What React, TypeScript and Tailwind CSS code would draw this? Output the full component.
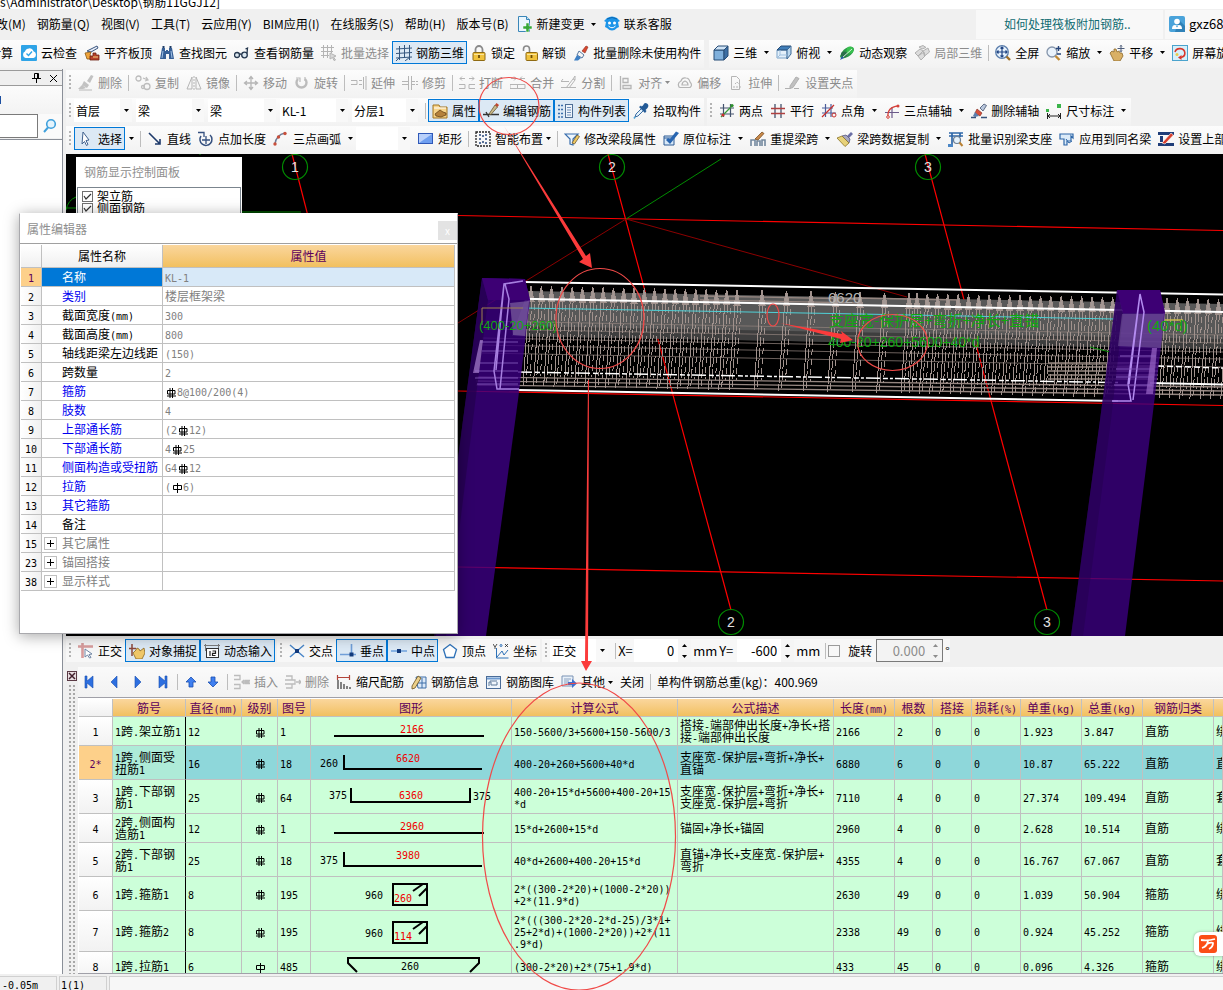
import type { ReactNode } from "react";

/* ---------- icons (16 x 16 grid) ---------- */

const icons: Record<string, ReactNode> = {
  newDoc: (
    <>
      <path d="M1.500 .5h8l3 3v12h-11z" fill="#eaf6fd" stroke="#3a86b8" />
      <path d="M9.500 .5v3h3" fill="#bfe0f2" stroke="#3a86b8" />
      <path d="M9 7h3v3h3v3h-3v3H9v-3H6v-3h3z" fill="#35a838" stroke="#fff" strokeWidth=".5" />
    </>
  ),
  service: (
    <>
      <path d="M3 2q5-3 10 0l3 3-2 1 1 5-2 1q-5 5-10 0l-2-1 1-5-2-1z" fill="#1c94e8" />
      <path d="M3 3q5-3 10 0" fill="none" stroke="#0f68b0" />
      <circle cx="5.500" cy="7" r="1.500" fill="#fff" />
      <circle cx="10.500" cy="7" r="1.500" fill="#fff" />
      <path d="M4.500 10q3.500 3.500 7 0" fill="none" stroke="#fff" />
    </>
  ),
  user: (
    <>
      <rect width="16" height="16" rx="2" fill="#4aa3da" />
      <path d="M10 4l6 6v6H6z" fill="#2f82b8" />
      <circle cx="8" cy="5.500" r="2.800" fill="#fff" />
      <path d="M3 13q0-4 3-4h4q3 0 3 4z" fill="#fff" />
      <path d="M6.500 9.500l1.500 2 1.500-2z" fill="#4aa3da" />
    </>
  ),
  cloud: (
    <>
      <rect width="16" height="16" rx="1" fill="#2fa4e7" />
      <path d="M4.500 13a3.500 3.500 0 0 1-.5-6.500 4.500 4.500 0 0 1 8.500-.2 3.500 3.500 0 0 1 0 6.700z" fill="#fff" />
      <path d="M5.500 8.500l2 2 3.500-4" fill="none" stroke="#2fa4e7" strokeWidth="1.400" />
    </>
  ),
  slab: (
    <>
      <path d="M3 6l10-5 1 2-7 4z" fill="#e8eef8" stroke="#3a557f" />
      <path d="M1 8l6-1-1 3 2 4H3z" fill="#f0a43c" stroke="#8a5a14" strokeWidth=".8" />
      <path d="M6 15v-4h3V8h3v2h3v5z" fill="#b8442b" stroke="#6c2010" strokeWidth=".8" />
      <path d="M9 12h5" stroke="#f4d080" />
    </>
  ),
  binoc: (
    <>
      <path d="M3 3h3v3h1V5h2v1h1V3h3l2 11h-5V9H7v5H1z" fill="#365f96" />
      <path d="M4 6l-1 7M12 6l1 7" stroke="#9fc0e6" />
      <path d="M3.500 1h2v2h-2zM10.500 1h2v2h-2z" fill="#1f3c66" />
    </>
  ),
  glasses: (
    <g fill="#dce8f0" stroke="#26384f" strokeWidth="1.300">
      <circle cx="3" cy="10" r="2.500" />
      <circle cx="10.500" cy="10" r="2.800" />
      <path d="M5.500 9.500q1-1 2.200 0M13 8.500L13.500 3l-2 1" fill="none" />
    </g>
  ),
  gridPick: (
    <g fill="none" stroke="#b4b4b4">
      <path d="M2.500 0v13M6.500 0v13M10.500 0v8M0 2.500h13M0 6.500h12M0 10.500h8" />
      <path d="M9 8l6 3-2.500 1 2 3-1.500.5-1.500-3L9 14z" fill="#d8d8d8" />
    </g>
  ),
  rebar3d: (
    <g fill="none" stroke="#35577f">
      <path d="M3.500 1v14M8.500 0v13M13.500 0v15M0 4l16-1M0 8.500l16-1M0 13l16-1M0 16l4-4M9 16l5-4" />
    </g>
  ),
  lock: (
    <>
      <path d="M4.500 8V4.500a3.500 3.500 0 0 1 7 0V8" fill="none" stroke="#8a8a8a" strokeWidth="1.800" />
      <rect x="2" y="7.500" width="12" height="8" rx="1" fill="#f0c23c" stroke="#8f6a12" />
      <path d="M3 9.500h10" stroke="#fae49a" />
      <path d="M8 10v3" stroke="#6d4e08" strokeWidth="1.800" />
    </>
  ),
  unlock: (
    <>
      <path d="M1.500 6V4a3 3 0 0 1 6 0v4" fill="none" stroke="#8a8a8a" strokeWidth="1.600" />
      <rect x="4" y="7.500" width="11.500" height="8" rx="1" fill="#f0c23c" stroke="#8f6a12" />
      <path d="M5 9.500h9.500" stroke="#fae49a" />
      <path d="M9.500 10v3" stroke="#6d4e08" strokeWidth="1.800" />
    </>
  ),
  brush: (
    <>
      <path d="M9 6l4-5 2 1-3 6z" fill="#d9482f" stroke="#8b2b1c" strokeWidth=".6" />
      <path d="M6 6l5 4-2 3-5-3z" fill="#f5f5f5" stroke="#57779f" />
      <path d="M4 10l4 3-3 2.500H1z" fill="#3d7fc4" />
    </>
  ),
  brushAxis: (
    <>
      <path d="M9 5l4-4 2.500 1.500L12 8z" fill="#b9c7dd" stroke="#44536e" strokeWidth=".8" />
      <path d="M6 6l5 4-2 3-5-3z" fill="#d8503c" stroke="#7b2417" strokeWidth=".6" />
      <path d="M4 9l4 4-4 1-2-1z" fill="#5d7fae" />
      <path d="M0 14.500h5M10 14.500h6" stroke="#36527b" strokeWidth="1.400" />
    </>
  ),
  cube: (
    <>
      <path d="M1 5h10v10H1z" fill="#7fb0dc" stroke="#274c77" />
      <path d="M1 5l4-4h10l-4 4z" fill="#cfe3f5" stroke="#274c77" />
      <path d="M11 5l4-4v10l-4 4z" fill="#3c6ea3" stroke="#274c77" />
    </>
  ),
  cubeTop: (
    <>
      <path d="M1 5h10v8H1z" fill="#e4f0fa" stroke="#7ba3c9" />
      <path d="M1 5l4-4h10l-4 4z" fill="#3f7db8" stroke="#274c77" />
      <path d="M11 5l4-4v8l-4 5z" fill="#b9d6ee" stroke="#3c6894" />
      <path d="M4 5v5l-3 3M4 10h7" fill="none" stroke="#9fc0df" />
    </>
  ),
  orbit: (
    <>
      <path d="M1 11Q4 3 10 2q5-1 5 3-2 6-9 8-5 1-5-2z" fill="#2f9a4a" />
      <circle cx="11" cy="5" r="3.500" fill="#38c04f" />
      <circle cx="5" cy="9.500" r="3" fill="#2a6f4a" />
      <path d="M3 13L13 4" stroke="#d7f5d9" />
      <path d="M1 15l4-2-2-2z" fill="#2858a8" />
    </>
  ),
  cubes: (
    <g fill="#dcdcdc" stroke="#b0b0b0">
      <path d="M5 2l4-1.500 3 2L8 4zM1 8l5-4 3 2-5 5zM9 6l5-3 1.500 4-5 4zM4 11l6-4 1 4-4 4z" />
    </g>
  ),
  fullscreen: (
    <>
      <circle cx="7" cy="7" r="6.300" fill="#e6f1fc" stroke="#5a7dab" strokeWidth="1.300" />
      <path d="M7 2v10M2 7h10M5.500 3.500L7 2l1.500 1.500M5.500 10.500L7 12l1.500-1.500M3.500 5.500L2 7l1.500 1.500M10.500 5.500L12 7l-1.500 1.500" fill="none" stroke="#1f4484" strokeWidth="1.200" />
      <path d="M11.500 11.500l3.500 3.500" stroke="#a0702b" strokeWidth="2.400" />
    </>
  ),
  zoom: (
    <>
      <circle cx="6" cy="7" r="5" fill="#eaf3fc" stroke="#8595ab" strokeWidth="1.300" />
      <path d="M9.500 11l4 4" stroke="#c08a35" strokeWidth="2.400" />
      <path d="M10 3.500h5M12.500 1v5M11 9h4" stroke="#27457a" strokeWidth="1.400" />
    </>
  ),
  pan: (
    <>
      <path d="M1 8l2-2 2 1V4l2 0 1 3 2-1 1 2h2l1 3-3 5H5L3 12z" fill="#d9b066" stroke="#8d6a2c" strokeWidth=".8" />
      <path d="M12 0v7M8.500 3.500h7M11 1.500L12 .5l1 1M11 5.500l1 1 1-1" fill="none" stroke="#4c5c7a" />
    </>
  ),
  spin: (
    <>
      <rect x=".5" y=".5" width="15" height="15" fill="#d6effa" stroke="#4aa3cd" />
      <path d="M3 7a5 4.500 0 1 1 6 5.500" fill="none" stroke="#d9362b" strokeWidth="1.600" />
      <path d="M9.500 10v5L6 12.500z" fill="#d9362b" />
      <circle cx="5" cy="9.500" r="1.500" fill="#e8cc4a" />
    </>
  ),
  gBrush: (
    <g fill="#c2c2c2">
      <path d="M9 6l4-6 2.500 1L12 8zM6 6l5 4-2 3-5-3zM4 10l4 3-3 1H0z" />
      <path d="M1 15h13" stroke="#b8b8b8" />
    </g>
  ),
  gCopy: (
    <g fill="none" stroke="#bdbdbd" strokeWidth="1.300">
      <circle cx="3.500" cy="3.500" r="2.500" />
      <circle cx="12" cy="11.500" r="3" />
      <circle cx="8" cy="12" r="1.500" />
      <path d="M8 3l5 2M11 2l2 3-3 1" />
    </g>
  ),
  gMirror: (
    <g fill="none" stroke="#b5b5b5">
      <path d="M6 2v12H1zM10 2v12h5z" />
      <path d="M8 1v14" strokeDasharray="2 1" />
    </g>
  ),
  gMove: (
    <g fill="none" stroke="#b5b5b5" strokeWidth="1.300">
      <path d="M8 2v12M2 8h12M6 4l2-2.500L10 4M6 12l2 2.500 2-2.500M4 6L1.500 8 4 10M12 6l2.500 2-2.500 2" />
    </g>
  ),
  gRotate: (
    <g fill="none" stroke="#bcbcbc" strokeWidth="2.400">
      <path d="M4 4a5 5 0 1 0 7 0" />
      <path d="M2 3h4v4M11 2v4" strokeWidth="1.200" />
    </g>
  ),
  gExtend: (
    <g fill="none" stroke="#b5b5b5">
      <path d="M0 5.500h6v4H0M8 5.500h3M8 9.500h3M12.500 2v12M15 1v14" />
    </g>
  ),
  gTrim: (
    <g fill="none" stroke="#b5b5b5">
      <path d="M0 6.500h6M0 9.500h6M6.500 1v14M9.500 1v14M10 6.500h3M10 9.500h3M14 6.500h2M14 9.500h2" />
    </g>
  ),
  gBreak: (
    <g fill="none" stroke="#b5b5b5">
      <path d="M1 3.500h5M3 1.500l-2 2 2 2M10 3.500h5M13 1.500l2 2-2 2M0 9.500h6v4H0M16 9.500h-6v4h6" />
    </g>
  ),
  gMerge: (
    <g fill="none" stroke="#b5b5b5">
      <path d="M1 3.500h5M4 1.500l2 2-2 2M10 3.500h5M12 1.500l-2 2 2 2M0 9.500h15v4H0zM7.500 10v3" />
    </g>
  ),
  gSplit: (
    <g fill="none" stroke="#b5b5b5">
      <path d="M0 6.500h8M0 12.500h15M2 4l-2 2.500M5 13l7-9 2 1-6 8M12 4l2-3M14 1v4" />
    </g>
  ),
  gAlign: (
    <g fill="none" stroke="#b5b5b5" strokeWidth="1.300">
      <path d="M2.500 1v14M5 3.500h5v4H5zM5 10.500h8v3H5z" />
    </g>
  ),
  gOffset: (
    <g fill="none" stroke="#b5b5b5" strokeWidth="1.200">
      <path d="M2 12Q0 8 4 6q1-4 5-3 3 0 4 4 3 3 0 5.500H3z" />
      <path d="M5 10q0-3 3-4 3 1 3 4z" />
    </g>
  ),
  gStretch: (
    <g fill="none" stroke="#b5b5b5">
      <path d="M3.500 14.500v-13h5l3 3v10z" />
      <path d="M7 9l2-2 2 2M5 12h8" strokeDasharray="2 1" />
    </g>
  ),
  gGrip: (
    <g fill="#c0c0c0" stroke="#b0b0b0">
      <path d="M0 13.500h5M9 13.500h5" />
      <path d="M5 11l6-9 3 1.500-6 9-3 1z" />
    </g>
  ),
  prop: (
    <>
      <path d="M1 2h6l1 2h7v11H1z" fill="#f7d489" stroke="#a27420" />
      <path d="M2 5h12" stroke="#fff" />
      <path d="M3 11l5-4 3 2 3 1v2l-5 2-5-1z" fill="#b5813a" stroke="#5a3a10" strokeWidth=".7" />
    </>
  ),
  editBar: (
    <>
      <path d="M0 11.500h16M3 9l3 5" stroke="#333" strokeWidth="1.300" />
      <path d="M6 11l6-9 2.500 2-6.500 7.500z" fill="#c9b98a" stroke="#6c5a35" strokeWidth=".8" />
      <path d="M12 2l1.500-2L16 2l-1.500 2z" fill="#c0472f" />
    </>
  ),
  list: (
    <>
      <path d="M0 2.500h5M0 6.500h5M0 10.500h5M0 14h5" stroke="#3b6fae" strokeDasharray="2 1" strokeWidth="1.500" />
      <rect x="7.500" y="1.500" width="7" height="13" fill="#eef4fb" stroke="#4d6e96" />
      <path d="M9 4.500h4M9 7h4M9 9.500h4M9 12h4" stroke="#6f8fb8" />
    </>
  ),
  picker: (
    <>
      <path d="M2 14l1-3 6-6 2 2-6 6z" fill="#e3f1fb" stroke="#3b6ea5" />
      <path d="M6 4l6 6 1.500-2-1-1 2-2q2-3-.5-4.500T10 2.500l-1.500 1L8 2.500z" fill="#235a96" />
      <path d="M2 14l-1 1.500" stroke="#4aa3da" strokeWidth="1.500" />
    </>
  ),
  twoPt: (
    <>
      <path d="M4.500 1v13M11.500 1v13M1 5h14M1 11h14" stroke="#44536e" strokeWidth="1.200" />
      <path d="M2 14L14 2" stroke="#3a9a3a" strokeWidth="1.300" />
      <circle cx="4" cy="12" r="1.600" fill="#c9302c" />
      <circle cx="13" cy="2.500" r="1.600" fill="#2d8f2d" />
    </>
  ),
  parallel: (
    <>
      <path d="M5 1v14M11 1v14" stroke="#44536e" strokeWidth="1.300" />
      <path d="M1 5.500h14M1 10.500h14" stroke="#b04040" strokeWidth="1.300" />
    </>
  ),
  ptAngle: (
    <>
      <path d="M4.500 1v13M10 1v13M1 5h11M1 10h14" stroke="#4b5e9b" strokeWidth="1.200" />
      <path d="M1 14L13 2" stroke="#c9302c" strokeWidth="1.200" />
      <circle cx="13" cy="12" r="2" fill="none" stroke="#c9302c" />
    </>
  ),
  threeAxis: (
    <>
      <path d="M1 9.500h14M8 4v11" stroke="#6b5a8a" strokeWidth="1.200" />
      <path d="M4 14Q3 4 14 3" fill="none" stroke="#d5413a" strokeWidth="1.300" />
      <circle cx="14" cy="3" r="1.500" fill="#d5413a" />
      <circle cx="4" cy="14" r="1.300" fill="#fff" stroke="#d5413a" />
    </>
  ),
  dimension: (
    <>
      <path d="M1.500 10v6M14.500 10v6M2 13h12M4 11l-2 2 2 2M12 11l2 2-2 2" fill="none" stroke="#222" />
      <path d="M0 6h3v3H0zM11 1h4v4h-4z" fill="#3bb44a" />
    </>
  ),
  cursor: <path d="M5 1l6 8-3 .5 2 4-1.500 1-2-4L4 13z" fill="#fff" stroke="#40628f" />,
  line: <path d="M2 2l11 11M13 8v5H8" fill="none" stroke="#1e3a6b" strokeWidth="1.600" />,
  ptLen: (
    <>
      <path d="M3 5a6 6 0 1 0 9-1" fill="none" stroke="#35507f" strokeWidth="1.500" />
      <path d="M0 1.500h6V6M8 5v8M4 9h8" fill="none" stroke="#35507f" strokeWidth="1.300" />
    </>
  ),
  arc: (
    <>
      <path d="M2 13Q3 4 12 2" fill="none" stroke="#6f7c96" strokeWidth="1.400" />
      <circle cx="2" cy="13" r="1.700" fill="#c9503c" />
      <circle cx="5.500" cy="6" r="1.700" fill="#c9503c" />
      <circle cx="12" cy="2.500" r="1.700" fill="#c9503c" />
    </>
  ),
  rect: (
    <>
      <rect x=".5" y="2.500" width="14" height="10" fill="#6f9ff0" stroke="#2f58b8" />
      <path d="M1 3l13 0-13 9z" fill="#b9d0fa" />
    </>
  ),
  smart: (
    <>
      <rect x="1" y="1" width="14" height="14" fill="none" stroke="#222" strokeDasharray="2 1" strokeWidth="1.300" />
      <path d="M8 4v2M8 10v2M4 8h2M10 8h2M4 4h2M10 4h2M4 12h2M10 12h2" stroke="#27457a" strokeWidth="1.500" />
    </>
  ),
  modify: (
    <>
      <path d="M1 3h13L9 8v6l-3-1V8z" fill="#eef6fd" stroke="#3a6fae" strokeWidth="1.200" />
      <path d="M8 12l5-8 2.500 1.500L10.500 13z" fill="#f0c860" stroke="#6c5a35" strokeWidth=".8" />
    </>
  ),
  situ: (
    <>
      <path d="M1 5h10v9H1zM1 7h10" fill="#d9e9f8" stroke="#2c5a94" />
      <path d="M3 9l4 4 9-11-3-1.500L7 8 5 7z" fill="#2865b0" />
    </>
  ),
  respan: (
    <>
      <path d="M1 15V9h4v6M7 15v-5h3v5M12 15V9h3v6" fill="none" stroke="#74899f" strokeWidth="1.600" />
      <path d="M5 8l7-7 2 1.500L8 9z" fill="#c98a4b" stroke="#6d4216" strokeWidth=".7" />
    </>
  ),
  copySpan: (
    <>
      <path d="M10 5l4-4 2 2-4 4z" fill="#6b6fa5" />
      <path d="M5 5l4-1 4 4-1 4z" fill="#a8a8c0" stroke="#55557c" strokeWidth=".8" />
      <path d="M5 5l7 7-4 3.500L0 7z" fill="#e8d27a" stroke="#8a7327" strokeWidth=".8" />
    </>
  ),
  identify: (
    <>
      <path d="M1 2h14M1 5h14M4 2v13M12 2v4" stroke="#2e67a8" strokeWidth="1.700" />
      <circle cx="9" cy="9" r="3.500" fill="#e6f2fb" stroke="#6a7d93" strokeWidth="1.200" />
      <path d="M11.500 11.500l3 3.500" stroke="#b98032" strokeWidth="2" />
      <path d="M0 13h5v3H0z" fill="#4b87c6" />
    </>
  ),
  apply: (
    <>
      <path d="M1 3h13v4l-2-2v5H8v4H5V8H1z" fill="#dcebf8" stroke="#2e67a8" strokeWidth="1.200" />
      <path d="M7 8l3 4 3-2" fill="none" stroke="#2e67a8" />
    </>
  ),
  setTop: (
    <>
      <path d="M0 1h16v3H0zM0 12h16v3H0zM2 5h3v6H2z" fill="#1f3d78" />
      <path d="M4 12L13 2l2.500 2L7 13z" fill="#d9402d" stroke="#fff" strokeWidth=".6" />
    </>
  ),
  ortho: (
    <>
      <path d="M0 3.500h15M4.500 0v15" stroke="#d89c9c" strokeWidth="2.600" />
      <path d="M7 6l7 5-3 .5 2 3-1.500.5-2-3L7 14z" fill="#fff" stroke="#7086a5" />
    </>
  ),
  snap: (
    <>
      <path d="M3 1v12M0 5.500h7" fill="none" stroke="#8a463a" strokeWidth="1.500" />
      <path d="M4 10l3-3 1-2 2 1 1 2 4-3 1 5-3 6H7z" fill="#efc768" stroke="#8a6622" strokeWidth=".8" />
    </>
  ),
  dyn: (
    <>
      <path d="M0 2.500h16M1.500 1v7M14.500 1v5" stroke="#7c7c7c" />
      <rect x="2.500" y="5.500" width="12" height="9" fill="#fff" stroke="#333" />
      <path d="M6 8v5M8.500 8h3v2.300h-3v2.200h3" fill="none" stroke="#222" strokeWidth="1.200" />
    </>
  ),
  cross: (
    <>
      <path d="M1 2l14 12M1 14L15 2" stroke="#4a86c8" strokeWidth="1.500" />
      <path d="M6 6h4v4H6z" fill="#123a7c" />
    </>
  ),
  perp: (
    <>
      <path d="M0 11.500h16M11.500 1v11" stroke="#6f9ed8" strokeWidth="1.600" />
      <path d="M9.500 9.500h4v4h-4z" fill="#123a7c" />
    </>
  ),
  mid: (
    <>
      <path d="M0 8h16" stroke="#8ab4e4" strokeWidth="2" />
      <path d="M6 6h4v4H6z" fill="#123a7c" />
    </>
  ),
  penta: <path d="M8 1.500l6.500 5-2.500 8H4l-2.500-8z" fill="#fff" stroke="#2f72b8" strokeWidth="1.300" />,
  coord: (
    <g fill="none" stroke="#2f72b8">
      <path d="M3.500 5v10h12M4 14l5-6 2 4 4-5" />
      <path d="M0 1l2 3 2-3M2 4v2M12 1l3 3M15 1l-3 3" stroke="#222" strokeWidth=".8" />
      <circle cx="8" cy="2.500" r="1" />
    </g>
  ),
  insert: (
    <g fill="none" stroke="#bcbcbc" strokeWidth="1.300">
      <path d="M0 1.500h6v4H0M0 10.500h6v4H0M8 8h7M10 6L8 8l2 2M11 6.500h5v3h-5z" />
    </g>
  ),
  remove: (
    <g fill="none" stroke="#bcbcbc" strokeWidth="1.300">
      <path d="M1 2h6v4M0 6h10v4H0M7 10v4H1M11 8h5M14 6l2 2-2 2" />
    </g>
  ),
  scale: (
    <>
      <path d="M1.500 1v5M13.500 1v5M2 3.500h11" stroke="#b2443a" strokeWidth="1.200" />
      <path d="M2 6v9M5 8v7M8 10v5M11 12v3M14 13v2" stroke="#444" strokeWidth="1.300" />
    </>
  ),
  info: (
    <>
      <path d="M5 3h10v11H7z" fill="#dce9f8" stroke="#3e6fa8" />
      <path d="M7 9h8M11 4v10" stroke="#3e6fa8" />
      <path d="M1 12l6-10 3 2-6 10-3 1z" fill="#ecd08a" stroke="#6a4f1c" strokeWidth=".8" />
    </>
  ),
  library: (
    <>
      <rect x=".5" y="2.500" width="14" height="12" fill="#f0f6fc" stroke="#4a6c98" />
      <path d="M1 4.500h13" stroke="#6d9ad0" strokeWidth="2" />
      <path d="M3 12V8h2v3h6V8M4 7h7" fill="none" stroke="#5c7898" />
    </>
  ),
  other: (
    <>
      <path d="M1 2h11v10H1z" fill="#e9f1fa" stroke="#7b93b4" />
      <path d="M3 5h7M3 7h5M3 9h4" stroke="#8ba2c0" />
      <path d="M7 8h4V5l5 4.500-5 4.500v-3H7z" fill="#3d6fcf" />
    </>
  ),
  first: <path d="M3 2h2v5l6-5v12L5 9v5H3z" fill="#2d6fe0" stroke="#1a4fae" strokeWidth=".6" />,
  prev: <path d="M11 2v12L5 8z" fill="#2d6fe0" stroke="#1a4fae" strokeWidth=".6" />,
  next: <path d="M5 2v12l6-6z" fill="#2d6fe0" stroke="#1a4fae" strokeWidth=".6" />,
  last: <path d="M13 2h-2v5L5 2v12l6-5v5h2z" fill="#2d6fe0" stroke="#1a4fae" strokeWidth=".6" />,
  up: <path d="M8 3l5 5h-3v5H6V8H3z" fill="#3f7ff0" stroke="#1a4fae" strokeWidth=".8" />,
  down: <path d="M8 13l5-5h-3V3H6v5H3z" fill="#3f7ff0" stroke="#1a4fae" strokeWidth=".8" />,
  search: (
    <>
      <circle cx="9" cy="6" r="4.300" fill="#e4f4fd" stroke="#3fa0dc" strokeWidth="1.600" />
      <path d="M6 9.500L2 14" stroke="#3fa0dc" strokeWidth="2" />
    </>
  ),
};

function Icon({ name }: { name: string }) {
  return (
    <svg viewBox="0 0 16 16" className="h-4 w-4 shrink-0" aria-hidden="true">
      {icons[name]}
    </svg>
  );
}

function Caret() {
  return (
    <svg viewBox="0 0 5 3" className="h-[3px] w-[5px] shrink-0" aria-hidden="true">
      <path d="M0 0h5L2.500 3z" fill="currentColor" />
    </svg>
  );
}

/* ---------- toolbar pieces ---------- */

type ToolProps = { icon?: string; label: string; on?: boolean; off?: boolean; drop?: "wide" | "tight" };

function Tool({ icon, label, on, off, drop }: ToolProps) {
  return (
    <div className={`flex h-[23px] shrink-0 ${off ? "text-[#8c8c8c]" : "text-black"}`}>
      <button
        disabled={off}
        className={`flex h-full items-center gap-1 whitespace-nowrap pl-1 pr-[3px] ${
          on ? "bg-[#dce9f5] outline outline-1 -outline-offset-1 outline-[#0078d7]" : ""
        }`}
      >
        {icon && <Icon name={icon} />}
        {label}
      </button>
      {drop && (
        <button
          aria-label={`${label}菜单`}
          className={`flex h-full items-center ${drop === "wide" ? "w-3 justify-center" : "w-2"}`}
        >
          <Caret />
        </button>
      )}
    </div>
  );
}

function Sep() {
  return (
    <div className="flex h-[23px] w-1.5 shrink-0 items-center justify-center">
      <div className="h-4 w-px bg-[#bdbdbd]" />
    </div>
  );
}

function Grip() {
  return (
    <div className="flex h-[23px] w-2 shrink-0 items-center justify-center">
      <div className="h-[15px] w-0.5 bg-[repeating-linear-gradient(#b4b4b4_0_2px,transparent_2px_4px)]" />
    </div>
  );
}

function Combo({ label, value, width }: { label: string; value: string; width: string }) {
  return (
    <div className={`relative h-[23px] shrink-0 pr-1 ${width}`}>
      <select aria-label={label} className="h-full w-full appearance-none bg-white pl-0.5 outline-none">
        <option>{value}</option>
      </select>
      <span className="pointer-events-none absolute inset-y-0 right-1 flex w-3 items-center justify-center bg-[#f8f8f8]">
        <Caret />
      </span>
    </div>
  );
}

const bar = "flex shrink-0 items-start bg-gradient-to-b from-[#fcfcfc] to-[#f2f2f2] pt-px";

function Spin({ label, value, boxed }: { label: string; value: string; boxed?: boolean }) {
  return (
    <div
      className={`flex h-[23px] shrink-0 items-center ${
        boxed ? "border border-[#7a7a7a] bg-[#f3f3f3] text-[#8c8c8c]" : "bg-white"
      }`}
    >
      <input
        aria-label={label}
        defaultValue={value}
        disabled={boxed}
        className={`h-full bg-transparent text-right text-[13px] outline-none ${boxed ? "w-12" : "w-10"}`}
      />
      <div className={`ml-1 flex h-full w-[13px] flex-col items-center justify-center gap-2 ${boxed ? "" : "bg-[#f5f5f5]"}`}>
        <button aria-label={`${label} +`} className="rotate-180">
          <Caret />
        </button>
        <button aria-label={`${label} -`}>
          <Caret />
        </button>
      </div>
    </div>
  );
}

/* ---------- grid text: narrow Latin beside full-width Han ---------- */

function Grade({ bars = 3 }: { bars?: number }) {
  return (
    <svg viewBox="0 0 12 10" className="inline-block h-2.5 w-3 align-[-2px]" aria-hidden="true">
      {bars === 3 ? (
        <path d="M5 0v10M7.500 0v10M2.500 2.500h7.500v3.500H2.500zM2 8h9" fill="none" stroke="#000" />
      ) : (
        <path d="M6.500 0v10M2.500 2.500h8v4h-8z" fill="none" stroke="#000" />
      )}
    </svg>
  );
}

function Sim({ text }: { text: string }) {
  return (
    <>
      {text.split(/(\{[13]\}|[\x20-\x7a]+)/).map((part, i) => {
        if (part === "{3}") return <Grade key={i} />;
        if (part === "{1}") return <Grade key={i} bars={1} />;
        if (/^[\x20-\x7a]/.test(part)) {
          return (
            <span key={i} className="font-['DejaVu_Sans_Mono',monospace] text-[10px] leading-2">
              {part}
            </span>
          );
        }
        return part;
      })}
    </>
  );
}

/* ---------- property editor ---------- */

const props: [string, string, string, string][] = [
  ["1", "名称", "KL-1", "sel"],
  ["2", "类别", "楼层框架梁", "blue"],
  ["3", "截面宽度(mm)", "300", "black"],
  ["4", "截面高度(mm)", "800", "black"],
  ["5", "轴线距梁左边线距", "(150)", "black"],
  ["6", "跨数量", "2", "black"],
  ["7", "箍筋", "{3}8@100/200(4)", "blue"],
  ["8", "肢数", "4", "blue"],
  ["9", "上部通长筋", "(2{3}12)", "blue"],
  ["10", "下部通长筋", "4{3}25", "blue"],
  ["11", "侧面构造或受扭筋", "G4{3}12", "blue"],
  ["12", "拉筋", "({1}6)", "blue"],
  ["13", "其它箍筋", "", "blue"],
  ["14", "备注", "", "black"],
  ["15", "其它属性", "", "group"],
  ["23", "锚固搭接", "", "group"],
  ["38", "显示样式", "", "group"],
];

const nameTone: Record<string, string> = {
  sel: "bg-[#0078d7] text-white",
  blue: "text-[#0000f0]",
  black: "text-black",
  group: "text-[#808080]",
};

function PropertyEditor() {
  return (
    <section className="absolute left-[19px] top-[213px] z-20 flex h-[421px] w-[439px] flex-col border border-[#a9a9ad] border-t-white bg-white shadow-[0_2px_14px_rgba(0,0,0,0.35)]">
      <header className="flex h-[29px] shrink-0 items-center justify-between pl-[7px] text-[#8f8f8f]">
        属性编辑器
        <button aria-label="关闭" className="mt-1 flex h-[19px] w-[19px] items-center justify-center bg-[#e3e3e3] text-[10px] leading-none text-white">
          x
        </button>
      </header>
      <div className="border-t border-[#a0a0a0] pl-px pt-px">
        <table className="w-[434px] table-fixed border-separate border-spacing-0 leading-3">
          <colgroup>
            <col className="w-[21px]" />
            <col className="w-[121px]" />
            <col />
          </colgroup>
          <thead>
            <tr className="h-[23px]">
              <th className="border-b border-r border-[#c0c0c0] bg-gradient-to-b from-white to-[#f0f0f0]" />
              <th className="border-b border-r border-[#c0c0c0] bg-gradient-to-b from-white to-[#f0f0f0] font-normal">属性名称</th>
              <th className="border-b border-r border-[#c0c0c0] bg-gradient-to-b from-[#fad69c] to-[#f2c05e] font-normal text-[#5c005c]">
                属性值
              </th>
            </tr>
          </thead>
          <tbody>
            {props.map(([no, name, value, tone]) => (
              <tr key={no} className="h-[19px]">
                <th
                  className={`border-b border-r border-[#c0c0c0] p-0 font-normal ${
                    tone === "sel" ? "bg-[#fdd08a] text-[#5c005c]" : "bg-gradient-to-r from-white to-[#f0f0f0]"
                  }`}
                >
                  <Sim text={no} />
                </th>
                <td className={`whitespace-nowrap border-b border-r border-[#c0c0c0] p-0 ${nameTone[tone]}`}>
                  <div className="flex items-center">
                    <span className="flex w-5 shrink-0 pl-0.5">
                      {tone === "group" && (
                        <button aria-label={`展开${name}`} className="relative h-[13px] w-[13px] border border-[#c0c0c0] bg-white">
                          <span className="absolute left-[2px] top-[5px] h-px w-[7px] bg-black" />
                          <span className="absolute left-[5px] top-[2px] h-[7px] w-px bg-black" />
                        </button>
                      )}
                    </span>
                    <span>
                      <Sim text={name} />
                    </span>
                  </div>
                </td>
                <td
                  className={`whitespace-nowrap border-b border-r border-[#c0c0c0] p-0 pl-0.5 text-[#808080] ${
                    tone === "sel" ? "bg-[#d8e9f8]" : ""
                  }`}
                >
                  <Sim text={value} />
                </td>
              </tr>
            ))}
          </tbody>
        </table>
      </div>
    </section>
  );
}

function DisplayPanel() {
  return (
    <section className="absolute left-[76px] top-[157px] z-10 h-20 w-[166px] bg-white">
      <h2 className="px-2 py-1.5 leading-[18px] text-[#8f8f8f]">钢筋显示控制面板</h2>
      <div className="mx-px border border-[#7b858e] pl-1 pt-0.5 leading-3">
        {["架立筋", "侧面钢筋"].map((t) => (
          <label key={t} className="flex items-center gap-1">
            <input type="checkbox" defaultChecked className="h-[11px] w-[11px] appearance-none border border-[#707070] bg-white" />
            <svg viewBox="0 0 11 11" className="pointer-events-none -ml-[15px] h-[11px] w-[11px]" aria-hidden="true">
              <path d="M2 5l2 3 5-5" fill="none" stroke="#333" strokeWidth="1.200" />
            </svg>
            <span>{t}</span>
          </label>
        ))}
      </div>
    </section>
  );
}

/* ---------- 3D view ---------- */

const SLOPE = 0.019;

function stirrupXs() {
  const xs: number[] = [];
  for (let x = 531; x < 740; x += 10.3) xs.push(x);
  for (let x = 762; x < 910; x += 24.5) xs.push(x);
  for (let x = 917; x < 1116; x += 10.3) xs.push(x);
  for (let x = 1167; x < 1235; x += 10.3) xs.push(x);
  return xs;
}

function Scene() {
  const drop = (x: number) => (x - 525) * SLOPE;
  return (
    <svg viewBox="66 154 1157 482" className="block h-[482px] w-[1157px] max-w-none">
      <rect x="66" y="154" width="1157" height="482" fill="#000" />
      <g stroke="#f00" strokeWidth="1.200" fill="none">
        <path d="M292 154L309 220M608 154L731 610M925 154L1047 610" />
        <path d="M458 215.500L1223 230.500M458 391L1223 405.500M458 567L1223 581" />
      </g>
      <path d="M626 219L458 323M626 219L907 297" stroke="#8b0000" />
      <path d="M626 219L721 159M242 212H301M66 208H76M200 150v5" stroke="#008c00" />
      <path d="M76 197Q68 200 66 210" fill="none" stroke="#008c00" />

      {/* beam body */}
      <path d="M528 291L1223 304V349L512 336z" fill="#585858" />
      <path d="M515 326L1223 339V349L512 336z" fill="#3e3e3e" />

      {/* longitudinal bars */}
      <g stroke="#8f807b" fill="none" strokeOpacity=".75">
        {[38, 46, 55, 62, 70].map((y) => (
          <path key={y} d={`M482 ${283 + y}L1223 ${283 + y + 14}`} />
        ))}
      </g>
      <g stroke="#958680" fill="none" strokeWidth="1.300">
        {[94, 98, 102].map((y) => (
          <path key={y} d={`M476 ${283 + y}L1223 ${283 + y + 10}`} />
        ))}
        <path d="M700 296L860 299M700 300L860 303M855 298L960 300" />
        <path d="M1048 363h110M1048 367h110M1048 371h110M1048 375h110M1048 379h110" />
      </g>

      {/* stirrups */}
      {stirrupXs().map((x, i) => {
        const d = drop(x);
        const t = 288 + d;
        const b = 386 + d;
        return (
          <g key={i} stroke="#a1928d" fill="none" strokeWidth="1" shapeRendering="crispEdges">
            <path d={`M${x} ${t - 2}l-3 15h6z`} fill="#a39894" />
            <path d={`M${x - 2} ${t + 12}L${x - 8} ${b}`} />
            <path d={`M${x + 1} ${t + 12}L${x - 5} ${b - 3}`} strokeDasharray="9 2" />
            <path d={`M${x + 4} ${t + 16}L${x - 1} ${b - 10}`} strokeDasharray="6 4" />
          </g>
        );
      })}

      <g stroke="#fff" strokeWidth="2" fill="none">
        <path d="M524 282L1223 294.500" />
        <path d="M507 298.500L1223 312" />
        <path d="M518 390L1118 401" />
        <path d="M518 372L1118 382.500" strokeWidth="1.500" strokeDasharray="14 3 5 2 3 2" />
        <path d="M1150 383L1223 384.500" />
        <path d="M1158 366L1223 368" strokeWidth="1.500" strokeDasharray="6 3" />
      </g>
      <path d="M523 308L860 314L1115 319" stroke="#4fd0d6" fill="none" />
      <path d="M1090 347l20 5" stroke="#0a8c0a" />

      {/* left column */}
      <path d="M482 278L525 279L530 300L518 400L486 636H436L463 420z" fill="#3b0080" fillOpacity=".82" />
      <path d="M482 278L488 300L473 420L446 636H434L463 420z" fill="#24004e" fillOpacity=".7" />
      <path d="M482 278L525 279L530 300H488z" fill="#3d0074" />
      <path d="M510 303l19-2-4 35-12-1z" fill="#8870a8" fillOpacity=".6" />
      <path d="M480 340L473 373L479 373L483 340z" fill="#9a70c0" fillOpacity=".8" />
      <g fill="none" stroke="#a77fe0">
        <path d="M519 389H497L494 371L504 284L523 281M505 284l4 15-9 90M504 284l-8 86" strokeWidth="1.500" />
        <path d="M480 342h38M482 351h36M480 363h38M475 371h43M475 378h43M477 384h41" strokeOpacity=".6" />
      </g>
      <path d="M482 325V308H523" fill="none" stroke="#a08050" />

      {/* right column */}
      <path d="M1117 290H1160L1165 313L1152 420L1125 636H1071L1100 420z" fill="#3b0080" fillOpacity=".8" />
      <path d="M1117 290L1123 314L1111 420L1083 636H1071L1100 420z" fill="#24004e" fillOpacity=".5" />
      <path d="M1117 290H1160L1165 313H1123z" fill="#3d0074" />
      <path d="M1122 314h42l-3 34-43-2z" fill="#8870a8" fillOpacity=".45" />
      <path d="M1152 348l5 0-4 46h-7z" fill="#9a66c8" fillOpacity=".7" />
      <path d="M1112 401H1131L1128 384L1140 294L1144 312L1133 400M1140 294l-11 90" fill="none" stroke="#b48cf0" strokeWidth="1.500" />
      <path d="M1120 356h36M1116 369h38M1116 377h38M1114 385h38" stroke="#8a5cc0" />
      <path d="M1165 320h18" stroke="#c8b848" strokeWidth="1.500" />

      {/* grid bubbles */}
      {[
        [295, 167, "1"],
        [612, 167, "2"],
        [928, 167, "3"],
        [731, 622, "2"],
        [1047, 622, "3"],
      ].map(([x, y, n]) => (
        <g key={`${x}-${y}`}>
          <circle cx={x} cy={y} r="12.500" fill="none" stroke="#008c00" strokeWidth="1.200" />
          <text x={x} y={Number(y) + 5} textAnchor="middle" fill="#e0e0e0" className="font-['Liberation_Sans',sans-serif] text-sm">
            {n}
          </text>
        </g>
      ))}

      <g className="font-['Liberation_Sans',sans-serif] text-sm" fill="#10a810">
        <text x="479" y="330" className="text-[13px]">(400-20+260)</text>
        <text x="828" y="303" fill="#b4b4b4" className="text-[15px]">6620</text>
        <text x="829" y="326" className="font-['Noto_Sans_CJK_SC',sans-serif] text-[15px]">支座宽-保护层+弯折+净长+直锚</text>
        <text x="828" y="347">400-20+260+5600+40*d</text>
        <text x="1147" y="331" className="text-[15px]">(40*d)</text>
      </g>
    </svg>
  );
}

/* ---------- rebar table ---------- */

const cols: [string, string][] = [
  ["筋号", "w-[73px]"],
  ["直径(mm)", "w-[56px]"],
  ["级别", "w-[36px]"],
  ["图号", "w-[33px]"],
  ["图形", "w-[201px]"],
  ["计算公式", "w-[166px]"],
  ["公式描述", "w-[156px]"],
  ["长度(mm)", "w-[61px]"],
  ["根数", "w-[38px]"],
  ["搭接", "w-[39px]"],
  ["损耗(%)", "w-[49px]"],
  ["单重(kg)", "w-[61px]"],
  ["总重(kg)", "w-[61px]"],
  ["钢筋归类", "w-[71px]"],
];

type Row = { no: string; h: string; cells: string[]; shape: ReactNode };

const red = "#f00000";

function Stirrup({ y, size }: { y: number; size: string }) {
  return (
    <>
      <text x="54" y={y + 15}>960</text>
      <path d={`M82 ${y}h34v21h-34zM102 ${y + 7}l10-7M108 ${y + 12}l8-8`} />
      <text x="83" y={y + 18} fill={red}>{size}</text>
    </>
  );
}

const rows: Row[] = [
  {
    no: "1",
    h: "h-[29px]",
    cells: ["1跨.架立筋1", "12", "{3}", "1", "", "150-5600/3+5600+150-5600/3", "搭接-端部伸出长度+净长+搭\n接-端部伸出长度", "2166", "2", "0", "0", "1.923", "3.847", "直筋", "绑扎"],
    shape: (
      <>
        <path d="M23 19h150" />
        <text x="101" y="16" textAnchor="middle" fill={red}>2166</text>
      </>
    ),
  },
  {
    no: "2*",
    h: "h-[34px]",
    cells: ["1跨.侧面受\n扭筋1", "16", "{3}", "18", "", "400-20+260+5600+40*d", "支座宽-保护层+弯折+净长+\n直锚", "6880", "6", "0", "0", "10.87", "65.222", "直筋", "直螺纹"],
    shape: (
      <>
        <text x="9" y="21">260</text>
        <path d="M33 9v14h138" />
        <text x="97" y="16" textAnchor="middle" fill={red}>6620</text>
      </>
    ),
  },
  {
    no: "3",
    h: "h-[34px]",
    cells: ["1跨.下部钢\n筋1", "25", "{3}", "64", "", "400-20+15*d+5600+400-20+15\n*d", "支座宽-保护层+弯折+净长+\n支座宽-保护层+弯折", "7110", "4", "0", "0", "27.374", "109.494", "直筋", "套管"],
    shape: (
      <>
        <text x="18" y="19">375</text>
        <path d="M40 8v14h119V8" />
        <text x="100" y="19" textAnchor="middle" fill={red}>6360</text>
        <text x="162" y="20">375</text>
      </>
    ),
  },
  {
    no: "4",
    h: "h-[29px]",
    cells: ["2跨.侧面构\n造筋1", "12", "{3}", "1", "", "15*d+2600+15*d", "锚固+净长+锚固", "2960", "4", "0", "0", "2.628", "10.514", "直筋", "绑扎"],
    shape: (
      <>
        <path d="M23 19h150" />
        <text x="101" y="16" textAnchor="middle" fill={red}>2960</text>
      </>
    ),
  },
  {
    no: "5",
    h: "h-[34px]",
    cells: ["2跨.下部钢\n筋1", "25", "{3}", "18", "", "40*d+2600+400-20+15*d", "直锚+净长+支座宽-保护层+\n弯折", "4355", "4", "0", "0", "16.767", "67.067", "直筋", "套管"],
    shape: (
      <>
        <text x="9" y="21">375</text>
        <path d="M33 9v14h138" />
        <text x="97" y="16" textAnchor="middle" fill={red}>3980</text>
      </>
    ),
  },
  {
    no: "6",
    h: "h-[34px]",
    cells: ["1跨.箍筋1", "8", "{3}", "195", "", "2*((300-2*20)+(1000-2*20))\n+2*(11.9*d)", "", "2630", "49", "0", "0", "1.039", "50.904", "箍筋", "绑扎"],
    shape: <Stirrup y={7} size="260" />,
  },
  {
    no: "7",
    h: "h-[41px]",
    cells: ["1跨.箍筋2", "8", "{3}", "195", "", "2*(((300-2*20-2*d-25)/3*1+\n25+2*d)+(1000-2*20))+2*(11\n.9*d)", "", "2338", "49", "0", "0", "0.924", "45.252", "箍筋", "绑扎"],
    shape: <Stirrup y={11} size="114" />,
  },
  {
    no: "8",
    h: "h-[29px]",
    cells: ["1跨.拉筋1", "6", "{1}", "485", "", "(300-2*20)+2*(75+1.9*d)", "", "433", "45", "0", "0", "0.096", "4.326", "箍筋", "绑扎"],
    shape: (
      <>
        <path d="M46 20l-9-9V6h131v5l-9 9" />
        <text x="99" y="18" textAnchor="middle">260</text>
      </>
    ),
  },
];

function RebarTable() {
  return (
    <div className="min-h-0 flex-1 overflow-hidden border-b border-t border-[#a0a0a8] bg-white pl-px pt-px">
      <table className="w-full table-fixed border-separate border-spacing-0 leading-3">
        <colgroup>
          <col className="w-[34px]" />
          {cols.map(([name, w]) => (
            <col key={name} className={w} />
          ))}
          <col />
        </colgroup>
        <thead>
          <tr className="h-[18px] text-[#5c005c]">
            <th className="border-b border-r border-[#c0c0c0] bg-gradient-to-b from-white to-[#f0f0f0] p-0" />
            {cols.map(([name]) => (
              <th key={name} className="whitespace-nowrap border-b border-r border-[#c0c0c0] bg-gradient-to-b from-[#fad69c] to-[#f2c05e] p-0 font-normal">
                <Sim text={name} />
              </th>
            ))}
            <th className="border-b border-[#c0c0c0] bg-gradient-to-b from-[#fad69c] to-[#f2c05e] p-0" />
          </tr>
        </thead>
        <tbody>
          {rows.map((row) => {
            const sel = row.no === "2*";
            return (
              <tr key={row.no} className={`${row.h} ${sel ? "bg-[#8ed7da]" : "bg-[#ccffd9]"}`}>
                <th
                  className={`border-b border-r border-[#c0c0c0] p-0 font-normal ${
                    sel ? "bg-[#fdd08a] text-[#5c005c]" : "bg-gradient-to-b from-white to-[#f2f2f2]"
                  }`}
                >
                  <Sim text={row.no} />
                </th>
                {row.cells.map((cell, i) => (
                  <td
                    key={i}
                    className={`overflow-hidden whitespace-pre border-b border-r border-b-[#c0c0c0] p-0 ${
                      i === 0 ? "border-r-black" : "border-r-[#c0c0c0]"
                    } ${i === 2 ? "text-center" : i === 4 ? "" : "pl-0.5"} ${sel && i === 0 ? "bg-[#aeebd8]" : ""}`}
                  >
                    {i === 4 ? (
                      <svg
                        className={`block w-[200px] ${row.no === "7" ? "h-10" : row.h === "h-[29px]" ? "h-7" : "h-[33px]"}`}
                        stroke="#000"
                        strokeWidth="2"
                        fill="none"
                      >
                        <g className="font-['DejaVu_Sans_Mono',monospace] text-[10px] [&_text]:stroke-none [&_text:not([fill])]:fill-black">
                          {row.shape}
                        </g>
                      </svg>
                    ) : (
                      <Sim text={cell} />
                    )}
                  </td>
                ))}
              </tr>
            );
          })}
        </tbody>
      </table>
    </div>
  );
}

/* ---------- markup drawn over the window ---------- */

function Markup() {
  return (
    <svg className="pointer-events-none absolute left-0 top-0 z-30 h-[990px] w-[1223px]" aria-hidden="true">
      <g fill="none" stroke="#f04a48" strokeWidth="1.200">
        <ellipse cx="509" cy="106" rx="30" ry="28.500" />
        <ellipse cx="600" cy="318.500" rx="44" ry="50" />
        <ellipse cx="579" cy="836.500" rx="96.500" ry="153.500" />
        <ellipse cx="773" cy="315" rx="6" ry="11" />
        <ellipse cx="892.500" cy="342.500" rx="35" ry="28" />
      </g>
      <g fill="#fb3b3b">
        <path d="M504 126L586 256L590 253L592 268L579 262L583 259z" />
        <path d="M588 380h1L588 661h4L586 671L581 661h4z" />
        <path d="M780 323L842 334L841 331L853 340L840 343L841 339z" />
      </g>
    </svg>
  );
}

/* ---------- window ---------- */

const menus = ["改(M)", "钢筋量(Q)", "视图(V)", "工具(T)", "云应用(Y)", "BIM应用(I)", "在线服务(S)", "帮助(H)", "版本号(B)"];

export default function App() {
  return (
    <div className="relative flex h-screen flex-col overflow-hidden bg-[#f0f0f0] font-['Noto_Sans_CJK_SC',sans-serif] text-xs text-black">
      <div className="flex h-[9px] shrink-0 items-end overflow-hidden whitespace-nowrap bg-white leading-[15px]">
        s\Administrator\Desktop\钢筋11GGJ12]
      </div>

      <div className="flex h-[30px] shrink-0 items-center overflow-hidden whitespace-nowrap">
        <nav className="-ml-1 flex shrink-0 gap-[11px] pr-1">
          {menus.map((m) => (
            <button key={m}>{m}</button>
          ))}
        </nav>
        <Tool icon="newDoc" label="新建变更" drop="wide" />
        <Tool icon="service" label="联系客服" />
        <a href="#help" className="ml-auto flex h-[29px] w-[187px] shrink-0 items-center bg-[#f8f8f8] pl-7 text-[#0f6b72]">
          如何处理筏板附加钢筋..
        </a>
        <div className="ml-0.5 flex h-[29px] w-[58px] shrink-0 items-center gap-1 overflow-hidden bg-[#f8f8f8] pl-1 text-[13px]">
          <Icon name="user" />
          gxz688
        </div>
      </div>

      <div className="flex h-[30px] shrink-0 gap-[5px] overflow-hidden pt-px">
        <div className={`${bar} h-7`}>
          <span className="flex h-[23px] w-[17px] shrink-0 items-center justify-end overflow-hidden whitespace-nowrap pr-1">计算</span>
          <Tool icon="cloud" label="云检查" />
          <Tool icon="slab" label="平齐板顶" />
          <Tool icon="binoc" label="查找图元" />
          <Tool icon="glasses" label="查看钢筋量" />
          <Tool icon="gridPick" label="批量选择" off />
          <Tool icon="rebar3d" label="钢筋三维" on />
          <Tool icon="lock" label="锁定" />
          <Tool icon="unlock" label="解锁" />
          <Tool icon="brush" label="批量删除未使用构件" />
        </div>
        <div className={`${bar} h-7 grow`}>
          <Tool icon="cube" label="三维" drop="wide" />
          <Tool icon="cubeTop" label="俯视" drop="wide" />
          <Tool icon="orbit" label="动态观察" />
          <Tool icon="cubes" label="局部三维" off />
          <Sep />
          <Tool icon="fullscreen" label="全屏" />
          <Tool icon="zoom" label="缩放" drop="wide" />
          <Tool icon="pan" label="平移" drop="wide" />
          <Tool icon="spin" label="屏幕旋转" />
        </div>
      </div>

      <div className="flex min-h-0 flex-1">
        <aside className="mr-[3px] flex w-[63px] shrink-0 flex-col border-r border-[#8a8f98]">
          <header className="mt-px flex h-4 shrink-0 items-center justify-end gap-2 border-y border-[#9a9a9a] bg-[#efefef] pr-1">
            <button aria-label="固定">
              <svg viewBox="0 0 9 10" className="h-2.5 w-[9px]">
                <path d="M2.500 .5h4v5h-4zM0 5.500h9M4.500 6v4M5.500 1v4" fill="none" stroke="#000" />
              </svg>
            </button>
            <button aria-label="关闭面板">
              <svg viewBox="0 0 9 9" className="h-[9px] w-[9px]">
                <path d="M1 1l7 7M8 1L1 8" stroke="#000" />
              </svg>
            </button>
          </header>
          <div className="flex h-7 shrink-0 items-center bg-gradient-to-b from-[#fbfbfb] to-[#f3f3f3]">
            <span className="h-2 w-px bg-[#1d4fa0]" />
          </div>
          <div className="flex h-[25px] shrink-0">
            <input aria-label="搜索构件" className="h-6 w-[38px] border border-l-0 border-[#7a7a7a] bg-white outline-none" />
            <button aria-label="搜索" className="flex h-6 flex-1 items-center justify-center bg-[#fafafa]">
              <Icon name="search" />
            </button>
          </div>
          <div className="flex-1 border-t border-[#8a8f98] bg-white" />
        </aside>

        <main className="flex min-w-0 flex-1 flex-col">
          <div className={`${bar} mt-px h-7 self-start pr-px`}>
            <Grip />
            <Tool icon="gBrush" label="删除" off />
            <Sep />
            <Tool icon="gCopy" label="复制" off />
            <Tool icon="gMirror" label="镜像" off />
            <Sep />
            <Tool icon="gMove" label="移动" off />
            <Tool icon="gRotate" label="旋转" off />
            <Sep />
            <Tool icon="gExtend" label="延伸" off />
            <Tool icon="gTrim" label="修剪" off />
            <Sep />
            <Tool icon="gBreak" label="打断" off />
            <Tool icon="gMerge" label="合并" off />
            <Tool icon="gSplit" label="分割" off />
            <Sep />
            <Tool icon="gAlign" label="对齐" off drop="tight" />
            <Tool icon="gOffset" label="偏移" off />
            <Tool icon="gStretch" label="拉伸" off />
            <Sep />
            <Tool icon="gGrip" label="设置夹点" off />
          </div>

          <div className="flex h-7 shrink-0 gap-[3px]">
            <div className={`${bar} h-7`}>
              <Grip />
              <Combo label="楼层" value="首层" width="w-[62px]" />
              <Combo label="构件类型" value="梁" width="w-[72px]" />
              <Combo label="构件类别" value="梁" width="w-[72px]" />
              <Combo label="构件" value="KL-1" width="w-[72px]" />
              <Combo label="分层" value="分层1" width="w-[70px]" />
              <Sep />
              <Tool icon="prop" label="属性" on />
              <Tool icon="editBar" label="编辑钢筋" on />
              <Tool icon="list" label="构件列表" on />
              <Tool icon="picker" label="拾取构件" />
            </div>
            <div className={`${bar} h-7 pr-0.5`}>
              <Grip />
              <Tool icon="twoPt" label="两点" />
              <Tool icon="parallel" label="平行" />
              <Tool icon="ptAngle" label="点角" drop="wide" />
              <Tool icon="threeAxis" label="三点辅轴" drop="wide" />
              <Tool icon="brushAxis" label="删除辅轴" />
              <Tool icon="dimension" label="尺寸标注" drop="wide" />
            </div>
          </div>

          <div className={`${bar} h-7 overflow-hidden`}>
            <Grip />
            <Tool icon="cursor" label="选择" on drop="wide" />
            <Sep />
            <Tool icon="line" label="直线" />
            <Tool icon="ptLen" label="点加长度" />
            <Tool icon="arc" label="三点画弧" drop="wide" />
            <Combo label="画法" value="" width="w-[58px]" />
            <Tool icon="rect" label="矩形" />
            <Sep />
            <Tool icon="smart" label="智能布置" drop="tight" />
            <Sep />
            <Tool icon="modify" label="修改梁段属性" />
            <Tool icon="situ" label="原位标注" drop="wide" />
            <Tool icon="respan" label="重提梁跨" drop="wide" />
            <Tool icon="copySpan" label="梁跨数据复制" drop="wide" />
            <Tool icon="identify" label="批量识别梁支座" />
            <Tool icon="apply" label="应用到同名梁" />
            <Tool icon="setTop" label="设置上部筋" />
          </div>

          <div className="shrink-0 overflow-hidden bg-black">
            <Scene />
          </div>

          <div className="flex h-[31px] shrink-0 items-center gap-0.5 pb-0.5">
            <div className="flex shrink-0 items-center bg-[#f7f7f7]">
              <Grip />
              <Tool icon="ortho" label="正交" />
              <Tool icon="snap" label="对象捕捉" on />
              <Tool icon="dyn" label="动态输入" on />
            </div>
            <div className="flex shrink-0 items-center bg-[#f7f7f7]">
              <Grip />
              <Tool icon="cross" label="交点" />
              <Tool icon="perp" label="垂点" on />
              <Tool icon="mid" label="中点" on />
              <Tool icon="penta" label="顶点" />
              <Tool icon="coord" label="坐标" />
            </div>
            <div className="flex shrink-0 items-center bg-[#f7f7f7]">
              <Grip />
              <Combo label="坐标方式" value="正交" width="w-[62px]" />
              <Sep />
              <span className="w-4 text-[13px]">X=</span>
              <Spin label="X" value="0" />
              <span className="w-[28px] pl-0.5 text-[13px]">mm</span>
              <span className="w-[18px] text-[13px]">Y=</span>
              <Spin label="Y" value="-600" />
              <span className="w-[28px] pl-0.5 text-[13px]">mm</span>
              <Sep />
              <label className="flex items-center gap-2 pr-1">
                <input type="checkbox" className="h-3 w-3 appearance-none border border-[#9a9a9a] bg-[#f7f7f7]" />
                旋转
              </label>
              <Spin label="旋转角度" value="0.000" boxed />
              <span className="pl-0.5">°</span>
            </div>
          </div>

          <div className="flex min-h-0 flex-1">
            <div className="flex w-3 shrink-0 flex-col items-center pt-1">
              <button aria-label="关闭表格" className="h-2.5 w-2.5 border border-[#5a3a44] bg-[#e9dfe2]">
                <svg viewBox="0 0 8 8" className="h-2 w-2">
                  <path d="M1 1l6 6M7 1L1 7" stroke="#42202c" strokeWidth="1.500" />
                </svg>
              </button>
              <div className="mt-1 w-[6px] flex-1 bg-[radial-gradient(circle_at_1px_1px,#a8a8a8_1px,transparent_1px)] bg-[size:4px_4px]" />
            </div>
            <div className="flex min-w-0 flex-1 flex-col">
              <div className="flex h-[30px] shrink-0 items-center bg-gradient-to-b from-[#fafafa] to-[#f2f2f2]">
                {["first", "prev", "next", "last"].map((n) => (
                  <button key={n} aria-label={n} className="flex w-6 shrink-0 justify-center">
                    <Icon name={n} />
                  </button>
                ))}
                <Sep />
                {["up", "down"].map((n) => (
                  <button key={n} aria-label={n} className="flex w-[22px] shrink-0 justify-center">
                    <Icon name={n} />
                  </button>
                ))}
                <Sep />
                <Tool icon="insert" label="插入" off />
                <Tool icon="remove" label="删除" off />
                <Tool icon="scale" label="缩尺配筋" />
                <Tool icon="info" label="钢筋信息" />
                <Tool icon="library" label="钢筋图库" />
                <Tool icon="other" label="其他" drop="tight" />
                <Tool label="关闭" />
                <Sep />
                <span className="whitespace-nowrap pl-1">单构件钢筋总重(kg)：400.969</span>
              </div>
              <RebarTable />
            </div>
          </div>
        </main>
      </div>

      <footer className="flex h-4 shrink-0 gap-0.5 pt-0.5 leading-[14px]">
        <div className="w-[57px] border-r border-t border-[#d0d0d0] pl-0.5">
          <Sim text="-0.05m" />
        </div>
        <div className="w-12 border border-b-0 border-[#d0d0d0] pl-px">
          <Sim text="1(1)" />
        </div>
        <div className="flex-1 border-l border-t border-[#d0d0d0] bg-[#f7f7f7]" />
      </footer>

      <DisplayPanel />
      <PropertyEditor />

      <button
        aria-label="输入法"
        className="absolute right-0 top-[932px] z-20 flex h-6 w-[29px] items-center rounded-l-md bg-white pl-[5px] shadow-[0_0_3px_rgba(0,0,0,0.3)]"
      >
        <svg viewBox="0 0 18 18" className="h-[18px] w-[18px]">
          <rect width="18" height="18" rx="3" fill="#fb4e17" />
          <path d="M2 5q7 1 14-1M9 5q0 6-6 8M8 9q4-2 6-1 0 4-4 6" fill="none" stroke="#fff" strokeWidth="1.800" />
        </svg>
      </button>

      <Markup />
    </div>
  );
}
